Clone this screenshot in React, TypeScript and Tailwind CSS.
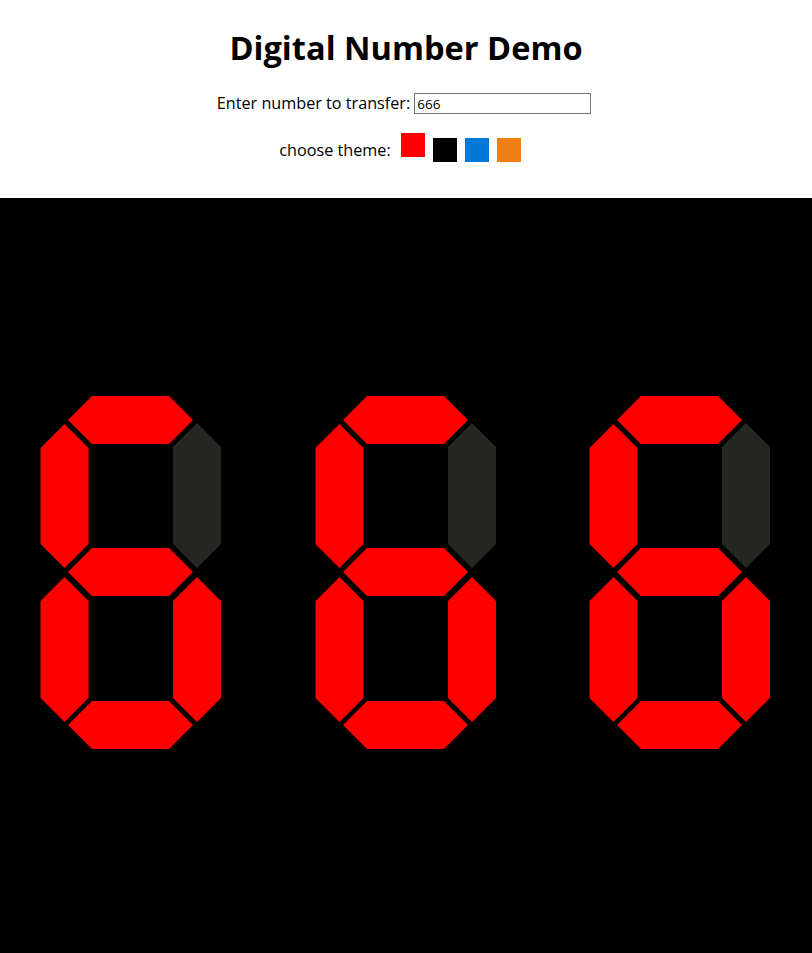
import React, { useState } from "react";

const ON = "#ff0000";
const OFF = "#262622";

const hSeg = (cy: number) =>
  `28,${cy} 52,${cy - 24} 129,${cy - 24} 153,${cy} 129,${cy + 24} 52,${cy + 24}`;
const vSeg = (cx: number, ty: number, by: number) =>
  `${cx},${ty} ${cx + 24},${ty + 24} ${cx + 24},${by - 24} ${cx},${by} ${cx - 24},${by - 24} ${cx - 24},${ty + 24}`;

const SEGMENTS: Record<string, string> = {
  a: hSeg(24),
  b: vSeg(157, 27, 172),
  c: vSeg(157, 181, 326),
  d: hSeg(329),
  e: vSeg(24.5, 181, 326),
  f: vSeg(24.5, 28, 172),
  g: hSeg(176),
};

const DIGIT_MAP: Record<string, string> = {
  "0": "abcdef",
  "1": "bc",
  "2": "abged",
  "3": "abgcd",
  "4": "fgbc",
  "5": "afgcd",
  "6": "afgedc",
  "7": "abc",
  "8": "abcdefg",
  "9": "abcdfg",
};

function Digit({ ch, color }: { ch: string; color: string }) {
  const on = DIGIT_MAP[ch] ?? "";
  return (
    <svg width="181" height="353" viewBox="0 0 181 353" className="block shrink-0">
      {Object.entries(SEGMENTS).map(([k, pts]) => (
        <polygon key={k} points={pts} fill={on.includes(k) ? color : OFF} />
      ))}
    </svg>
  );
}

const THEMES = [
  { name: "red", swatch: "bg-[#ff0000]", color: ON },
  { name: "black", swatch: "bg-black", color: ON },
  { name: "blue", swatch: "bg-[#0078d7]", color: "#0078d7" },
  { name: "orange", swatch: "bg-[#f27e16]", color: "#f27e16" },
];

export default function App() {
  const [value, setValue] = useState("666");
  const [theme, setTheme] = useState(0);
  const color = THEMES[theme].color;
  return (
    <div className="w-full bg-white text-black font-['Segoe_UI','Open_Sans','Noto_Sans',sans-serif]">
      <div className="h-[198px] flex flex-col items-center">
        <h1 className="mt-[27px] h-[42px] leading-[42px] text-[32.6px] font-bold">Digital Number Demo</h1>
        <div className="mt-[24px] h-[21px] flex items-center text-[16.2px] pr-[4px]">
          <span>Enter number to transfer:</span>
          <input
            value={value}
            onChange={(e) => setValue(e.target.value)}
            className="ml-[4px] w-[177px] h-[21px] border border-[#767676] px-[2px] text-[13.5px] font-['Segoe_UI','Open_Sans',sans-serif] outline-none"
          />
        </div>
        <div className="mt-[24px] h-[24px] flex items-center text-[16.2px] pr-[4px]">
          <span className="mr-[10px]">choose theme:</span>
          {THEMES.map((t, i) => (
            <button
              key={t.name}
              onClick={() => setTheme(i)}
              className={`w-[24px] h-[24px] mr-[8px] ${t.swatch} ${i === theme ? "-translate-y-[5px]" : ""}`}
            />
          ))}
        </div>
      </div>
      <div className="h-[755px] bg-black flex justify-start pl-[40px] gap-[93.5px] pt-[198px]">
        {value.split("").map((ch, i) => (
          <Digit key={i} ch={ch} color={color} />
        ))}
      </div>
    </div>
  );
}
